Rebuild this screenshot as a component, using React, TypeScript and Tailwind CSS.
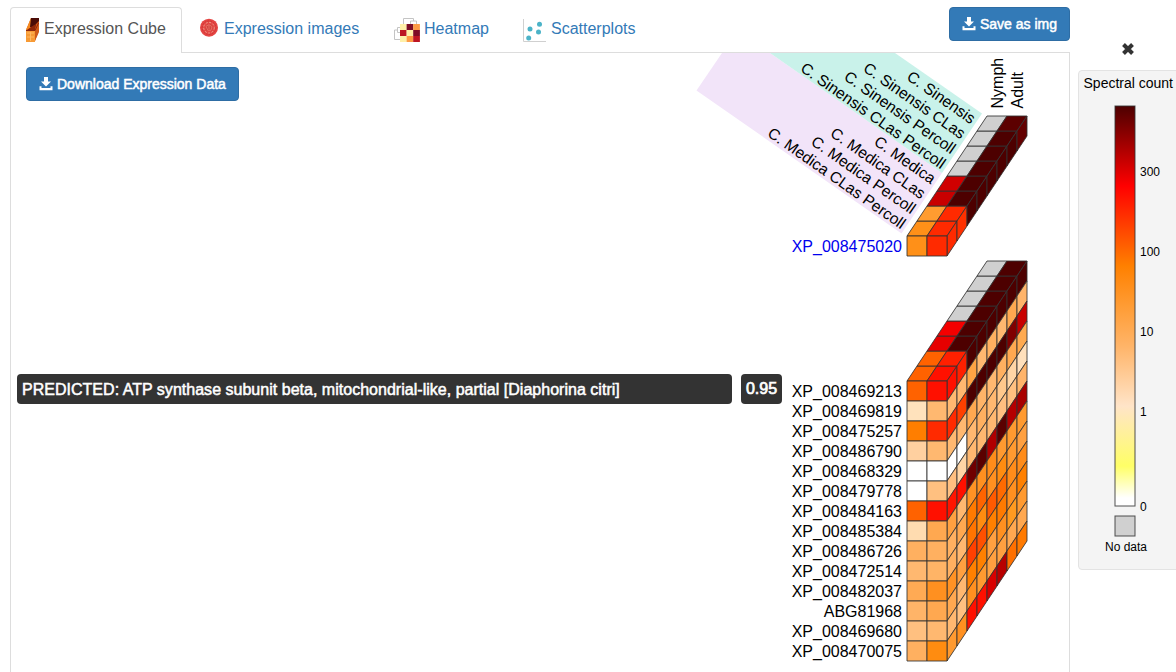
import React from "react";

type Pt = [number, number];

const GENES = [
  "XP_008469213", "XP_008469819", "XP_008475257", "XP_008486790", "XP_008468329",
  "XP_008479778", "XP_008484163", "XP_008485384", "XP_008486726", "XP_008472514",
  "XP_008482037", "ABG81968", "XP_008469680", "XP_008470075",
];

const G = "#d0d0d0";
const D = "#4d0000";

const FRONT: string[][] = [
  ["#ff6200", "#ff1000"], ["#ffe2bc", "#ffb870"], ["#ff7e00", "#ff2a00"], ["#ffd0a0", "#ffb870"],
  ["#ffffff", "#ffffff"], ["#ffffff", "#ffc080"], ["#ff6200", "#ff1000"], ["#ffdcb0", "#ffa850"],
  ["#ffb060", "#ffb060"], ["#ffb870", "#ffb466"], ["#ffaa54", "#ff9020"], ["#ffb468", "#ffa850"],
  ["#ffc080", "#ffb870"], ["#ffb060", "#ff8c10"],
];
const TOP: string[][] = [
  ["#ff6200", "#ff1000"], ["#ff6200", "#ff2000"], ["#e60000", D], ["#f40000", D],
  [G, D], [G, D], [G, D], [G, D],
];
const SIDE: string[][] = [
  ["#ff1000", "#ff2000", D, D, D, D, D, D],
  ["#ffb870", "#ffb870", "#ffa444", "#ffb870", "#ffb060", "#ffb870", "#ffa850", "#ffb46a"],
  ["#ff2a00", "#ff4000", D, D, D, D, "#800000", "#c80000"],
  ["#ffb870", "#ffb870", "#ffa850", "#ffb468", "#ffb870", "#ffb060", "#ffa850", "#ffaa50"],
  ["#ffffff", "#ffffff", "#ffb870", "#ffb060", "#ffb870", "#ffc88c", "#ffd5a5", "#ffe0bc"],
  ["#ffbf80", "#ffd5a5", "#ffb870", "#ffb870", "#ffb870", "#ffbf80", "#ffc080", "#ffb46a"],
  ["#ff1500", "#ff1000", "#700000", "#5a0000", "#b00000", "#5a0000", "#b40000", "#a80000"],
  ["#ffa040", "#ffb870", "#ff9224", "#ff9020", "#ff8c1a", "#ff9a30", "#ff9a30", "#ff9a30"],
  ["#ffb060", "#ffa850", "#ff7a00", "#ff6400", "#ff9020", "#ff8c10", "#ff9a30", "#ffa040"],
  ["#ffb060", "#ffb870", "#ff7400", "#ff8c10", "#ff5a00", "#ff6a00", "#ff8c1a", "#ff8c1a"],
  ["#ff9224", "#ffa040", "#ff4000", "#ff5000", "#ff8000", "#ff7a00", "#ff9020", "#ff8000"],
  ["#ffa850", "#ffb870", "#ff8000", "#ff8000", "#ffa040", "#ff9020", "#ff9a20", "#ff9a30"],
  ["#ffb870", "#ffc080", "#ff9020", "#ff9a30", "#ffa040", "#ffa040", "#ffa850", "#ffa850"],
  ["#ff9a30", "#ff9020", "#ff1000", "#ff1000", "#d80000", "#b80000", "#ff7000", "#ff7a00"],
];

const PINNED_FRONT = [["#ff9018", "#ff2a00"]];
const PINNED_TOP: string[][] = [
  ["#ff9018", "#ff2a00"], ["#ff9c30", "#ff2a00"], ["#c80000", D], ["#d00000", D],
  [G, D], [G, D], [G, D], [G, "#5c0000"],
];
const PINNED_SIDE = [["#ff2a00", "#ff3000", D, D, D, D, D, "#640000"]];

const TISSUES = [
  "C. Medica CLas Percoll", "C. Medica Percoll", "C. Medica CLas", "C. Medica",
  "C. Sinensis CLas Percoll", "C. Sinensis Percoll", "C. Sinensis CLas", "C. Sinensis",
];

function Cell({ pts, fill }: { pts: Pt[]; fill: string }) {
  return <polygon points={pts.map((p) => p.join(",")).join(" ")} fill={fill} stroke="#333" strokeWidth={1} strokeOpacity={0.85} strokeLinejoin="round" />;
}

function Cube({ y, front, top, side }: { y: number; front: string[][]; top: string[][]; side: string[][] }) {
  const x = 907;
  return (
    <g>
      {top.map((row, i) =>
        row.map((c, j) => {
          const a = x + 10 * i + 20 * j;
          const b = y - 15 * i;
          return <Cell key={`t${i}-${j}`} fill={c} pts={[[a, b], [a + 20, b], [a + 30, b - 15], [a + 10, b - 15]]} />;
        }),
      )}
      {side.map((row, r) =>
        row.map((c, i) => {
          const a = x + 40 + 10 * i;
          const b = y - 15 * i + 20 * r;
          return <Cell key={`s${r}-${i}`} fill={c} pts={[[a, b], [a + 10, b - 15], [a + 10, b + 5], [a, b + 20]]} />;
        }),
      )}
      {front.map((row, r) =>
        row.map((c, j) => {
          const a = x + 20 * j;
          const b = y + 20 * r;
          return <Cell key={`f${r}-${j}`} fill={c} pts={[[a, b], [a + 20, b], [a + 20, b + 20], [a, b + 20]]} />;
        }),
      )}
    </g>
  );
}

function ExpressionCube() {
  return (
    <svg className="block" width="1058" height="619" viewBox="11 53 1058 619" fontFamily="'Liberation Sans', Arial, sans-serif" fontSize="16">
      <polygon points="696.5,90.5 722,53 770,53 942,173 901.5,233.5" fill="#f2e4f9" />
      <polygon points="770,53 895,53 982,113.5 942,173" fill="#c9f2ea" />
      {TISSUES.map((t, i) => (
        <text key={t} textAnchor="end" fontSize="15.7" transform={`translate(${900.8 + 10 * i} ${229.6 - 15 * i}) rotate(35)`}>{t}</text>
      ))}
      <text transform="translate(1003 108.5) rotate(-90)">Nymph</text>
      <text transform="translate(1023 108.5) rotate(-90)">Adult</text>
      <text x="902" y="252" textAnchor="end" fill="#0000ee">XP_008475020</text>
      {GENES.map((g, i) => (
        <text key={g} x="902" y={397 + 20 * i} textAnchor="end">{g}</text>
      ))}
      <Cube y={236} front={PINNED_FRONT} top={PINNED_TOP} side={PINNED_SIDE} />
      <Cube y={381} front={FRONT} top={TOP} side={SIDE} />
    </svg>
  );
}

function SaveIcon() {
  return (
    <svg width="14" height="14" viewBox="0 0 14 14" fill="currentColor" className="shrink-0">
      <path d="M5 0h4v4.500h3L7 9.500 2 4.500h3zM.5 9.200h2v1.900h9V9.200h2v4H.5z" />
    </svg>
  );
}

function CubeIcon() {
  return (
    <svg width="14" height="24" viewBox="0 0 14 24">
      <path d="M0 12 5 0H13V12L9 23 0 24z" fill="#d45716" />
      <path d="M0 12 5 0H8L6 11z" fill="#f58a20" />
      <path d="M5 0H13V3L10 6 9 9 4 9z" fill="#4a0c08" />
      <path d="M1 12 5 9 10 6 9 12z" fill="#8e2508" />
      <path d="M0 13h9v11H0z" fill="#f79a35" />
      <path d="M1 15h7M1 19h7M4.500 14v9" stroke="#ffb85e" />
      <path d="M9 13 13 5v9l-4 9z" fill="#cf5a18" />
      <path d="M0 12.500h9L12.500 5" fill="none" stroke="#8c260c" />
    </svg>
  );
}

function CellIcon() {
  return (
    <svg width="18" height="19" viewBox="0 -.7 18 19">
      <circle cx="9" cy="9" r="9" fill="#e54543" />
      <circle cx="9" cy="9" r="6.800" fill="none" stroke="#c53431" strokeWidth=".8" strokeDasharray="2 1" />
      <circle cx="9" cy="9" r="5.300" fill="none" stroke="#e9a08c" strokeDasharray="2 1.500" />
      <circle cx="9" cy="9" r="3.600" fill="#cd4740" />
      <path d="M6 7.500 9 6l3 2-1 3.500-3 .5zM9 6v5" fill="none" stroke="#ec6b60" />
    </svg>
  );
}

const HEAT = ["#fff0a8", "#7e0d26", "#fd9b44", "#bd1522", "#fff0a8", "#7e0d26", "#fff0a8", "#fd9b44", "#bd1522"];

function HeatmapIcon() {
  return (
    <svg width="26" height="24" viewBox="0 0 26 24">
      <path d="M9.500 6V.5h10V3M16.500 6V3h6v3M6 9.500H3.500v5H6M3.500 12H.5v9.500H6" fill="none" stroke="#c4c4c4" />
      {HEAT.map((c, i) => (
        <rect key={i} x={6 + (i % 3) * 6.6} y={6 + Math.floor(i / 3) * 6} width="6.700" height="6" fill={c} />
      ))}
    </svg>
  );
}

function ScatterIcon() {
  return (
    <svg width="23" height="24" viewBox="0 -1 23 24">
      <path d="M.5 0v22.500H23" fill="none" stroke="#d0d0d0" />
      {[[7, 10], [16.5, 5.300], [15.5, 13], [5.700, 19]].map(([x, y]) => (
        <circle key={x} cx={x} cy={y} r="2.500" fill="#4bb3c8" />
      ))}
    </svg>
  );
}

function Legend() {
  return (
    <aside className="w-[106px] shrink-0 pl-2 pt-[42px]">
      <button className="ml-[43px] block" aria-label="Close">
        <svg width="14" height="14" viewBox="0 0 14 14">
          <path d="M2.500 2.500 11.500 11.500M11.500 2.500 2.500 11.500" stroke="#333" strokeWidth="4" />
        </svg>
      </button>
      <div className="mt-[14px] h-[500px] w-[120px] rounded border border-[#e3e3e3] bg-[#f4f4f4] text-black">
        <svg width="98" height="498" viewBox="1079 71 98 498" fontFamily="'Liberation Sans', Arial, sans-serif" fontSize="12">
          <defs>
            <linearGradient id="scale" x1="0" y1="0" x2="0" y2="1">
              <stop offset="0" stopColor="#4d0000" />
              <stop offset=".2" stopColor="#ff0000" />
              <stop offset=".4" stopColor="#ff8000" />
              <stop offset=".5" stopColor="#ff9c34" />
              <stop offset=".6" stopColor="#ffb468" />
              <stop offset=".75" stopColor="#ffe4c8" />
              <stop offset=".9" stopColor="#ffff66" />
              <stop offset=".98" stopColor="#ffffff" />
            </linearGradient>
          </defs>
          <text x="1083.500" y="88" fontSize="14" textLength="89.500">Spectral count</text>
          <rect x="1115" y="106" width="20" height="400" fill="url(#scale)" stroke="#333" strokeOpacity=".85" />
          <text x="1140" y="176">300</text>
          <text x="1140" y="256">100</text>
          <text x="1140" y="336">10</text>
          <text x="1140" y="416">1</text>
          <text x="1140" y="511">0</text>
          <rect x="1115" y="516" width="20" height="20" fill="#d0d0d0" stroke="#333" strokeOpacity=".85" />
          <text x="1105" y="551">No data</text>
        </svg>
      </div>
    </aside>
  );
}

export default function App() {
  return (
    <div className="flex h-[672px] w-[1176px] overflow-hidden bg-white font-['Liberation_Sans',Arial,sans-serif] text-black">
      <main className="ml-[10px] flex w-[1060px] shrink-0 flex-col pt-[7px]">
        <nav className="flex h-[46px] items-start text-[16px] leading-[22px] text-[#337ab7]">
          <div className="flex h-[46px] w-[172px] shrink-0 rounded-t border border-b-0 border-[#ddd] pl-[15px] pt-[10px] text-[#555]">
            <CubeIcon />
            <span className="ml-1 whitespace-nowrap">Expression Cube</span>
          </div>
          <div className="flex h-[46px] grow border-b border-[#ddd]">
            <div className="ml-[18px] flex w-[194px] pt-[11px]">
              <CellIcon />
              <span className="ml-[6px] whitespace-nowrap">Expression images</span>
            </div>
            <div className="flex w-[129px] pt-[11px]">
              <HeatmapIcon />
              <span className="ml-1 whitespace-nowrap">Heatmap</span>
            </div>
            <div className="flex pt-[11px]">
              <ScatterIcon />
              <span className="ml-[5px] whitespace-nowrap">Scatterplots</span>
            </div>
            <button className="ml-auto flex h-[34px] w-[121px] items-center gap-1 rounded border border-[#2e6da4] bg-[#337ab7] pl-3 text-[14px] text-white [-webkit-text-stroke:0.5px_white]">
              <SaveIcon />
              <span className="whitespace-nowrap">Save as img</span>
            </button>
          </div>
        </nav>
        <section className="relative h-[619px] border-x border-[#ddd]">
          <ExpressionCube />
          <button className="absolute left-[15px] top-[14px] flex h-[34px] w-[213px] items-center gap-1 rounded border border-[#2e6da4] bg-[#337ab7] pl-3 text-[14px] text-white [-webkit-text-stroke:0.5px_white]">
            <SaveIcon />
            <span className="whitespace-nowrap">Download Expression Data</span>
          </button>
          <div className="absolute left-[6px] top-[321px] flex h-[30px] w-[715px] items-center rounded bg-[#333] pl-[5px] pt-[2px] text-[16px] tracking-[0.02px] text-white [-webkit-text-stroke:0.5px_white]">
            <span className="whitespace-nowrap">PREDICTED: ATP synthase subunit beta, mitochondrial-like, partial [Diaphorina citri]</span>
          </div>
          <div className="absolute left-[730px] top-[321px] flex h-[30px] w-[41px] items-center justify-center rounded bg-[#333] text-[16px] text-white [-webkit-text-stroke:0.7px_white]">
            0.95
          </div>
        </section>
      </main>
      <Legend />
    </div>
  );
}
